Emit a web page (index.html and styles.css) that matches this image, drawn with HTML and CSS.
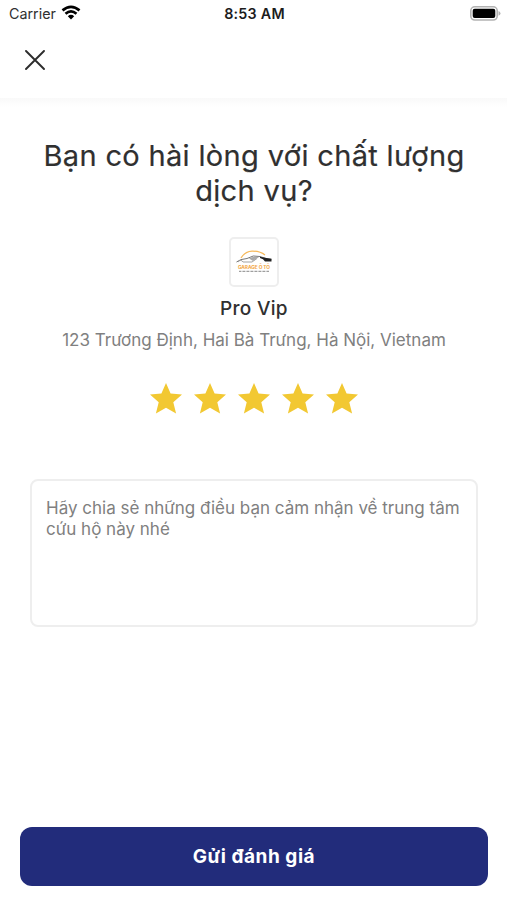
FILE: index.html
```html
<!DOCTYPE html>
<html lang="vi">
<head>
<meta charset="utf-8">
<meta name="viewport" content="width=device-width, initial-scale=1">
<title>Đánh giá</title>
<link rel="stylesheet" href="styles.css">
</head>
<body>
<div class="screen">
  <div class="status">
    <div class="network">
      <span class="carrier">Carrier</span>
      <svg class="wifi" width="20" height="15" viewBox="0 0 20 15" fill="none" stroke="#000" stroke-width="2.7">
        <path d="M1.5 5.4Q10-1.8 18.5 5.4M4.5 8.7Q10 4.1 15.5 8.7"/>
        <path d="M6.8 11.2Q10 8.4 13.2 11.2L10 14.5Z" fill="#000" stroke="none"/>
      </svg>
    </div>
    <span class="clock">8:53 AM</span>
    <svg class="battery" width="31" height="15" viewBox="0 0 31 15">
      <rect x=".8" y=".8" width="26.4" height="13.2" rx="4" fill="#fff" stroke="#b2b2b2" stroke-width="1.6"/>
      <rect x="2.7" y="2.8" width="22.6" height="9.2" rx="2" fill="#000"/>
      <path d="M28.5 5.1Q30.5 6 30.5 7.4Q30.5 8.8 28.5 9.7Z" fill="#b2b2b2"/>
    </svg>
  </div>
  <header class="toolbar">
    <button class="close" aria-label="Đóng">
      <svg width="20" height="20" viewBox="0 0 20 20" stroke="#2c2c2c" stroke-width="1.9" stroke-linecap="round"><path d="M1 1L19 19M19 1L1 19"/></svg>
    </button>
  </header>
  <main class="content">
    <h1 class="title">Bạn có hài lòng với chất lượng<br>dịch vụ?</h1>
    <div class="logo">
      <svg width="40" height="28" viewBox="0 0 40 28">
        <path d="M7 10Q11 3.5 18 3.2Q26 3 31 7" fill="none" stroke="#f6b95a" stroke-width="1.2"/>
        <path d="M2.5 14Q6 11 13 10.5Q19 6.5 26 8.5L32 10.5L37.5 11" fill="none" stroke="#777" stroke-width="1"/>
        <path d="M9 14Q7 10.8 4 14M9 14H18L23 10.5" fill="none" stroke="#999" stroke-width=".9"/>
        <path d="M15 10.4Q19 7.8 25 9.2L19 13Z" fill="#aaa"/>
        <path d="M26 8.7L37.5 11V13.5H31Q29.5 10.5 26 10Z" fill="#222"/>
        <text class="brand" x="4" y="20.6" textLength="32" lengthAdjust="spacing">GARAGE Ô TÔ</text>
        <path d="M5 23.3H35" stroke="#888" stroke-width="1" stroke-dasharray="2 .6 1 .4"/>
      </svg>
    </div>
    <h2 class="name">Pro Vip</h2>
    <p class="address">123 Trương Định, Hai Bà Trưng, Hà Nội, Vietnam</p>
    <div class="stars">
      <svg viewBox="0 0 32 31"><path d="M16 0L20.6 10.6L32 11.6L23.3 19.2L26.1 30.6L16 24.7L5.9 30.6L8.7 19.2L0 11.6L11.4 10.6Z"/></svg>
      <svg viewBox="0 0 32 31"><path d="M16 0L20.6 10.6L32 11.6L23.3 19.2L26.1 30.6L16 24.7L5.9 30.6L8.7 19.2L0 11.6L11.4 10.6Z"/></svg>
      <svg viewBox="0 0 32 31"><path d="M16 0L20.6 10.6L32 11.6L23.3 19.2L26.1 30.6L16 24.7L5.9 30.6L8.7 19.2L0 11.6L11.4 10.6Z"/></svg>
      <svg viewBox="0 0 32 31"><path d="M16 0L20.6 10.6L32 11.6L23.3 19.2L26.1 30.6L16 24.7L5.9 30.6L8.7 19.2L0 11.6L11.4 10.6Z"/></svg>
      <svg viewBox="0 0 32 31"><path d="M16 0L20.6 10.6L32 11.6L23.3 19.2L26.1 30.6L16 24.7L5.9 30.6L8.7 19.2L0 11.6L11.4 10.6Z"/></svg>
    </div>
    <div class="comment">Hãy chia sẻ những điều bạn cảm nhận về trung tâm<br>cứu hộ này nhé</div>
  </main>
  <button class="submit">Gửi đánh giá</button>
</div>
</body>
</html>
```
FILE: styles.css
```css
* { box-sizing: border-box; }
body { margin: 0; background: #fff; font-family: Inter, "Liberation Sans", sans-serif; color: #303030; }
button { font: inherit; border: 0; padding: 0; }
h1, h2, p { margin: 0; font-weight: 400; }
svg { display: block; }
.screen { height: 900px; display: flex; flex-direction: column; overflow: hidden; }
.status { height: 26px; display: grid; grid-template-columns: 1fr auto 1fr; align-items: center; padding: 0 6px 0 9px; flex: none; }
.network { display: flex; align-items: center; gap: 5px; }
.carrier { font-size: 14.3px; }
.wifi { margin-top: -1px; }
.clock { margin-left: -1px; font-size: 14.3px; font-weight: 600; letter-spacing: .25px; color: #1c1c1c; }
.battery { justify-self: end; }
.toolbar { height: 72px; padding: 24px 25px; flex: none; }
.close { display: block; background: none; }
.content { flex: 1; display: flex; flex-direction: column; align-items: center; padding: 40px 29px 0 30px; background: linear-gradient(#f9f9f9, #fff 9px); white-space: nowrap; }
.title { font-size: 29px; line-height: 35px; letter-spacing: .34px; -webkit-text-stroke: .2px #303030; text-align: center; }
.logo { width: 50px; height: 50px; margin-top: 29px; border: 2px solid #eee; border-radius: 5px; display: grid; place-items: center; }
.brand { font-size: 4.8px; font-weight: 700; fill: #f3a746; }
.name { margin-top: 9px; font-size: 19px; line-height: 26px; font-weight: 500; letter-spacing: .3px; }
.address { margin-top: 6px; font-size: 17px; line-height: 24px; color: #808080; }
.stars { display: flex; gap: 12px; margin-top: 31px; }
.stars svg { width: 32px; height: 31px; fill: #f2c832; }
.comment { align-self: stretch; height: 148px; margin-top: 65px; padding: 16px 14px; border: 2px solid #eee; border-radius: 8px; font-size: 17px; line-height: 21px; color: #808080; padding-top: 17px; }
.submit { height: 59px; margin: 0 19px 14.5px 20px; flex: none; border-radius: 12px; background: #222c7b; color: #fff; font-size: 19px; font-weight: 700; letter-spacing: .55px; }
```
